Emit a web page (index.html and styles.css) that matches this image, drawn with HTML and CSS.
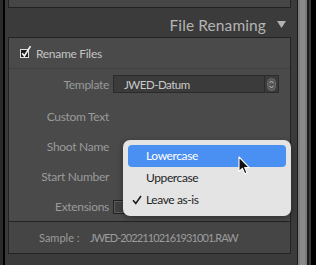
FILE: index.html
```html
<!DOCTYPE html>
<html>
<head>
<meta charset="utf-8">
<link rel="stylesheet" href="styles.css">
</head>
<body>
<div class="screen">
  <div class="edge-l"></div>
  <div class="panel">
    <div class="topbox"></div>
    <div class="header">
      <span class="title">File Renaming</span>
      <svg class="tri" width="9" height="7" viewBox="0 0 9 7"><path d="M0 0H9L4.5 7Z" fill="#b3b3b3"/></svg>
    </div>
    <div class="box">
      <div class="row-check">
        <svg class="cb" width="14" height="14" viewBox="0 0 14 14">
          <rect x="1.5" y="4.5" width="8" height="8" fill="#1e1e1e" stroke="#e0e0e0" stroke-width="1"/>
          <path d="M3.2 8.2 L5.4 11 L11.5 1.2" fill="none" stroke="#f2f2f2" stroke-width="1.6"/>
        </svg>
        <span class="check-lbl">Rename Files</span>
      </div>
      <div class="row tpl">
        <span class="lbl">Template</span>
        <div class="select">
          <span class="sel-text">JWED-Datum</span>
          <span class="stepper">
            <svg width="9" height="13" viewBox="0 0 9 13"><rect x="0.5" y="0.5" width="8" height="12" rx="4" fill="#565656" stroke="#6a6a6a"/><path d="M2.5 5.2 L4.5 3 L6.5 5.2M2.5 7.8 L4.5 10 L6.5 7.8" fill="none" stroke="#bdbdbd" stroke-width="1"/></svg>
          </span>
        </div>
      </div>
      <div class="row"><span class="lbl">Custom Text</span></div>
      <div class="row"><span class="lbl">Shoot Name</span></div>
      <div class="row"><span class="lbl">Start Number</span></div>
      <div class="row"><span class="lbl">Extensions</span><span class="ext-box"></span></div>
    </div>
    <div class="sample">
      <span class="s-lbl">Sample :</span>
      <span class="s-val">JWED-20221102161931001.RAW</span>
    </div>
    <div class="header next">
      <span class="title">Apply During Import</span>
      <svg class="tri" width="9" height="7" viewBox="0 0 9 7"><path d="M0 0H9L4.5 7Z" fill="#b3b3b3"/></svg>
    </div>
  </div>
  <div class="scroll"></div>

  <div class="menu">
    <div class="item active">Lowercase</div>
    <div class="item">Uppercase</div>
    <div class="item checked">
      <svg class="tick" width="10" height="10" viewBox="0 0 10 10"><path d="M1 5.2 L3.8 8.4 L9 1" fill="none" stroke="#1f1f1f" stroke-width="1.6"/></svg>
      Leave as-is
    </div>
  </div>

  <svg class="cursor" width="13" height="19" viewBox="0 0 13 19">
    <path d="M1 1 L1 15.5 L4.4 12.4 L6.8 17.8 L9 16.8 L6.7 11.6 L11.3 11.6 Z" fill="#111" stroke="#fff" stroke-width="1.1" stroke-linejoin="round"/>
  </svg>
</div>
</body>
</html>
```

FILE: styles.css
```css
* { box-sizing: border-box; }
html, body { margin: 0; padding: 0; background: #000; }
body { font-family: "Lato", "Open Sans", sans-serif; }

.screen {
  position: relative;
  width: 316px;
  height: 265px;
  overflow: hidden;
  display: flex;
  background: #000;
}

.edge-l {
  width: 5px;
  flex: none;
  background: #2b2b2b;
  border-right: 2px solid #000;
}

.panel {
  width: 292px;
  flex: none;
  background: #3b3b3b;
  padding: 0 6px 0 3px;
}

.topbox {
  height: 8px;
  background: #464646;
  border: 1px solid #232323;
  border-top: 0;
}

.header {
  height: 29px;
  display: flex;
  align-items: center;
  justify-content: flex-end;
  gap: 11px;
  padding-right: 5px;
  padding-top: 5px;
}
.header .title {
  font-size: 15.5px;
  color: #b4b4b4;
  letter-spacing: 0.1px;
}
.header .tri { flex: none; margin-top: -1px; }

.box {
  background: #4a4a4a;
  border: 1px solid #232323;
}

.row-check {
  height: 31px;
  display: flex;
  align-items: center;
  padding-left: 10px;
  border-bottom: 1px solid #404040;
}
.cb { flex: none; margin-top: -3px; }
.check-lbl {
  margin-left: 3px;
  font-size: 12px;
  letter-spacing: -0.3px;
  color: #c4c4c4;
}

.row {
  height: 30px;
  display: flex;
  align-items: center;
}
.row.tpl { height: 32px; padding-bottom: 2px; }

.lbl {
  width: 100px;
  flex: none;
  text-align: right;
  font-size: 12px;
  letter-spacing: -0.3px;
  color: #9a9a9a;
}

.select {
  margin-left: 4px;
  width: 166px;
  height: 18px;
  background: #3b3b3b;
  border: 1px solid #2b2b2b;
  display: flex;
  align-items: center;
}
.sel-text {
  flex: 1;
  padding-left: 10px;
  font-size: 11.5px;
  letter-spacing: -0.5px;
  color: #c9c9c9;
}
.stepper {
  width: 14px;
  height: 16px;
  border-left: 1px solid #2b2b2b;
  display: flex;
  align-items: center;
  justify-content: center;
}
.stepper svg { display: block; }

.ext-box {
  margin-left: 4px;
  margin-top: 2px;
  width: 14px;
  height: 14px;
  background: #404040;
  border: 1px solid #222;
  box-shadow: inset 0 0 0 1px #5a5a5a;
}

.sample {
  height: 32px;
  background: #454545;
  border: 1px solid #232323;
  border-top: 0;
  display: flex;
  align-items: center;
  padding-left: 30px;
  font-size: 11px;
  color: #9c9c9c;
}
.s-lbl { width: 51px; flex: none; }
.s-val { letter-spacing: -0.9px; }

.header.next { height: 29px; padding-top: 13px; }

.scroll {
  width: 19px;
  flex: none;
  background: linear-gradient(to right,
    #1c1c1c 0 1px,
    #7c7c7c 1px 3px,
    #8a8a8a 3px 8px,
    #7c7c7c 8px 10px,
    #1e1e1e 10px 12px,
    #3a3a3a 12px 14px,
    #000 14px 19px);
}

.menu {
  position: absolute;
  left: 123px;
  top: 140px;
  width: 168px;
  height: 76px;
  background: #e4e4e4;
  border-radius: 7px;
  padding: 5px;
  box-shadow: 0 2px 6px rgba(0,0,0,0.35);
}
.item {
  position: relative;
  height: 22px;
  line-height: 22px;
  padding-left: 18px;
  font-size: 12px;
  letter-spacing: -0.4px;
  color: #1f1f1f;
  border-radius: 4px;
}
.item.active {
  background: #4a8ff2;
  color: #fff;
}
.tick {
  position: absolute;
  left: 4px;
  top: 6px;
}

.cursor {
  position: absolute;
  left: 238px;
  top: 156px;
}
```
